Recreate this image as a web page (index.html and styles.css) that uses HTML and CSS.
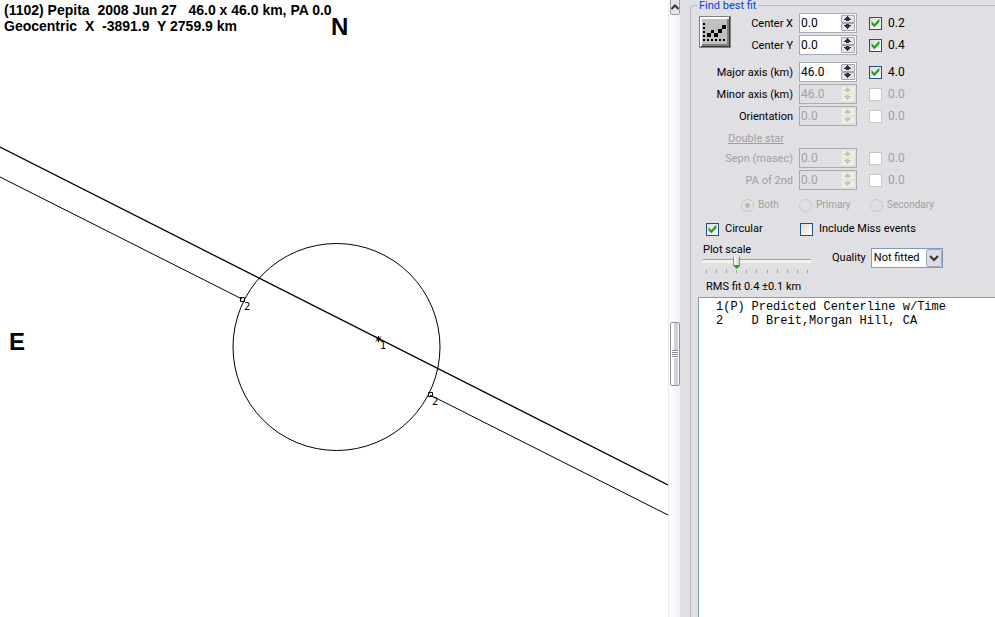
FILE: index.html
```html
<!DOCTYPE html>
<html lang="en">
<head>
<meta charset="utf-8">
<title>Find best fit</title>
<link rel="stylesheet" href="styles.css">
</head>
<body>
<svg class="defs" aria-hidden="true">
  <symbol id="up" viewBox="0 0 13 8"><path d="M6 1h1v1h1v1h1v1h1v1H8v1H5V5H3V4h1V3h1V2h1z"/></symbol>
  <symbol id="down" viewBox="0 0 13 8"><path d="M3 2h2V1h3v1h2v1H9v1H8v1H7v1H6V5H5V4H4V3H3z"/></symbol>
</svg>
<main class="plot">
  <svg class="chart" viewBox="0 0 668 617" preserveAspectRatio="xMinYMin slice" role="img" aria-label="Occultation chords">
    <circle cx="336.500" cy="347" r="103.500"/>
    <path class="center" d="M0 147L668 485"/>
    <path d="M0 177L242 299M430 395L668 515"/>
    <path d="M240.500 297.500h4v4h-4zM428.500 392.500h4v4h-4zM376 336.500l5 5m0-5l-5 5m0-2.500h5m-2.500-3v6"/>
    <text x="244" y="310">2</text><text x="380" y="349">1</text><text x="432" y="405">2</text>
    <text class="compass" x="331" y="35">N</text><text class="compass" x="9" y="350">E</text>
  </svg>
  <header class="title"><p>(1102) Pepita  2008 Jun 27   46.0 x 46.0 km, PA 0.0</p><p>Geocentric  X  -3891.9  Y 2759.9 km</p></header>
</main>
<div class="scroll" aria-hidden="true">
  <svg class="scroll-up" viewBox="0 0 10 16"><path d="M.5 0v13.500q0 1 1 1h7q1 0 1-1V0" fill="#e4e4ee" stroke="#9a9aaa"/><path d="M1.500 9L5 5.500 8.500 9" fill="none" stroke="#333" stroke-width="2"/></svg>
  <div class="thumb"><i></i></div>
</div>
<aside class="panel">
<form class="fit">
  <h1>Find best fit</h1>
  <section class="values">
    <button type="button" class="run" aria-label="Find best fit"><svg viewBox="0 0 32 32"><path fill="#c0c0c0" d="M0 0h32v32H0z"/><path fill="#808080" d="M0 0h32v1H1v31H0zM28 3h2v27H3v-2h25z"/><path fill="#fff" d="M1 1h29v2H3v27H1z"/><path fill="#333" d="M30 1h1v30H2v-1h28z"/><path fill="#808080" d="M31 1h1v31H1v-1h30z"/><path d="M4 7h2v2H4zm0 4h2v2H4zm0 4h2v2H4zm0 4h2v2H4zm0 4h2v2H4zm4 0h2v2H8zm4 0h2v2h-2zm4 0h2v2h-2zm4 0h2v2h-2zm4 0h2v2h-2zM8 17h4v4H8zM12 14h3v3h-3zM15 17h4v4h-4zM19 13h4v4h-4zM23 9h4v4h-4z"/></svg></button>
    <div class="row"><label for="cx">Center X</label><div class="spin"><input id="cx" value="0.0"><button type="button" aria-label="Increase"><svg><use href="#up"/></svg></button><button type="button" aria-label="Decrease"><svg><use href="#down"/></svg></button></div><label class="check"><input type="checkbox" checked>0.2</label></div>
    <div class="row"><label for="cy">Center Y</label><div class="spin"><input id="cy" value="0.0"><button type="button" aria-label="Increase"><svg><use href="#up"/></svg></button><button type="button" aria-label="Decrease"><svg><use href="#down"/></svg></button></div><label class="check"><input type="checkbox" checked>0.4</label></div>
    <div class="row group"><label for="ma">Major axis (km)</label><div class="spin"><input id="ma" value="46.0"><button type="button" aria-label="Increase"><svg><use href="#up"/></svg></button><button type="button" aria-label="Decrease"><svg><use href="#down"/></svg></button></div><label class="check"><input type="checkbox" checked>4.0</label></div>
    <div class="row"><label for="mi">Minor axis (km)</label><div class="spin off"><input id="mi" value="46.0" disabled><button type="button" disabled aria-label="Increase"><svg><use href="#up"/></svg></button><button type="button" disabled aria-label="Decrease"><svg><use href="#down"/></svg></button></div><label class="check off"><input type="checkbox" disabled>0.0</label></div>
    <div class="row"><label for="or">Orientation</label><div class="spin off"><input id="or" value="0.0" disabled><button type="button" disabled aria-label="Increase"><svg><use href="#up"/></svg></button><button type="button" disabled aria-label="Decrease"><svg><use href="#down"/></svg></button></div><label class="check off"><input type="checkbox" disabled>0.0</label></div>
    <h2>Double star</h2>
    <div class="row off"><label for="se">Sepn (masec)</label><div class="spin off"><input id="se" value="0.0" disabled><button type="button" disabled aria-label="Increase"><svg><use href="#up"/></svg></button><button type="button" disabled aria-label="Decrease"><svg><use href="#down"/></svg></button></div><label class="check off"><input type="checkbox" disabled>0.0</label></div>
    <div class="row off"><label for="pa">PA of 2nd</label><div class="spin off"><input id="pa" value="0.0" disabled><button type="button" disabled aria-label="Increase"><svg><use href="#up"/></svg></button><button type="button" disabled aria-label="Decrease"><svg><use href="#down"/></svg></button></div><label class="check off"><input type="checkbox" disabled>0.0</label></div>
  </section>
  <div class="radios"><label><input type="radio" name="star" checked disabled>Both</label><label><input type="radio" name="star" disabled>Primary</label><label><input type="radio" name="star" disabled>Secondary</label></div>
  <div class="options"><label class="check"><input type="checkbox" checked>Circular</label><label class="check"><input type="checkbox">Include Miss events</label></div>
  <div class="settings">
    <div class="scale"><label for="scale">Plot scale</label><input id="scale" type="range" min="0" max="10" value="3"><div class="ticks"><i></i><i></i><i></i><i></i><i></i><i></i><i></i><i></i><i></i><i></i><i></i></div></div>
    <label for="quality">Quality</label>
    <div class="select"><select id="quality"><option>Not fitted</option></select><svg viewBox="0 0 16 18"><rect x=".5" y=".5" width="15" height="17" rx="1" fill="#dcdce8" stroke="#a5a5b8"/><path d="M4 7l4 4 4-4" fill="none" stroke="#333" stroke-width="2"/></svg></div>
  </div>
  <output class="rms">RMS fit 0.4 ±0.1 km</output>
  <table class="events"><tbody><tr><td>1(P)</td><td>Predicted Centerline w/Time</td></tr><tr><td>2</td><td>D Breit,Morgan Hill, CA</td></tr></tbody></table>
  <div class="rest"></div>
</form>
</aside>
</body>
</html>
```
FILE: styles.css
```css
* { box-sizing: border-box; }
body { margin: 0; min-height: 100vh; display: flex; background: #fff; color: #000; font: 11px/14px Roboto, "Liberation Sans", sans-serif; overflow: hidden; }
h1, h2, p { margin: 0; font: inherit; }
button, input, select { font: inherit; color: inherit; margin: 0; padding: 0; border: 0; }
.defs { position: absolute; width: 0; height: 0; }

.plot { position: relative; flex: 1; min-width: 0; overflow: hidden; }
.chart { position: absolute; width: 100%; height: 100%; fill: none; stroke: #000; stroke-width: 1; }
.chart .center { stroke-width: 1.3; }
.chart text { fill: #000; stroke: none; font: 10px "DejaVu Sans", sans-serif; }
.chart .compass { font: bold 24px "Liberation Sans", sans-serif; }
.title { position: relative; padding: 2px 4px; font: bold 14px/16px "Liberation Sans", sans-serif; white-space: pre; }

.scroll { flex: none; width: 12px; display: flex; flex-direction: column; justify-content: space-between; align-items: flex-end; border-left: 1px solid #ecebdc; background: linear-gradient(90deg, #fff, #f0f0f8); }
.scroll-up { width: 10px; height: 16px; }
.thumb { width: 10px; height: 64px; margin-bottom: 231px; border: 1px solid #8f8fa0; border-radius: 2px; background: linear-gradient(90deg, #fff 0 3px, #cfcfdf 3px 7px, #fff 7px); display: grid; place-items: center; }
.thumb i { width: 6px; height: 8px; background: repeating-linear-gradient(#888898 0 1px, #fff 1px 2px); }

.panel { flex: none; width: 315px; padding: 5px 0 0 10px; background: #e0dfe4; display: flex; }
.fit { flex: 1; min-width: 0; display: flex; flex-direction: column; border: 1px solid #bdb6be; border-width: 1px 0 0 1px; border-top-left-radius: 4px; padding-left: 7px; }
h1 { align-self: flex-start; height: 12px; line-height: 12px; color: #0046d5; background: #e0dfe4; padding: 0 2px; margin: -6px 0 1px -1px; }
.values { position: relative; display: flex; flex-direction: column; gap: 2px; }
.run { position: absolute; top: 3px; left: 1px; width: 32px; height: 32px; background: none; }
.run svg { display: block; width: 32px; height: 32px; }
.row { display: grid; grid-template-columns: 95px 58px 1fr; column-gap: 6px; height: 20px; align-items: center; }
.row > label:first-child { text-align: right; padding-top: 2px; }
.row.group { margin-top: 5px; }
.off, .radios { color: #a09fa3; }
h2 { margin: 4px 0 0 30px; height: 14px; color: #a09fa3; text-decoration: underline; }
.spin { height: 20px; display: grid; grid-template-columns: 1fr 14px; grid-template-rows: 8px 8px; column-gap: 1px; border: 1px solid #a5acb2; background: #fff; padding: 1px; }
.spin.off { background: #e0dfe4; }
.spin input { grid-row: 1 / 3; min-width: 0; height: 15px; background: none; font-size: 12px; }
.spin button { border: 1px solid #a5a5b0; border-radius: 1px; background: #e4e4ec; display: flex; fill: #333; }
.spin svg { width: 13px; height: 8px; margin: -1px; flex: none; }
.spin.off button { border-color: #e7e6d8; background: #f0efe6; fill: #c9c7ba; }
.check { display: flex; align-items: center; gap: 6px; }
.row .check { padding-left: 6px; font-size: 12px; }
input[type="checkbox"] { appearance: none; flex: none; width: 13px; height: 13px; border: 1px solid #1c5180; background: linear-gradient(135deg, #dcdcd7, #fff); display: grid; place-items: center; }
input[type="checkbox"]:checked::before { content: ""; width: 9px; height: 9px; background: #21a121; clip-path: polygon(6% 30%, 38% 60%, 90% 4%, 95% 36%, 38% 96%, 6% 66%); }
input[type="checkbox"]:disabled { border-color: #cac8bb; background: #fff; }
.radios { display: grid; grid-template-columns: 58px 71px auto; justify-content: start; padding-left: 43px; margin-top: 8px; height: 14px; font-size: 10px; }
.radios label { display: flex; align-items: center; gap: 4px; }
input[type="radio"] { appearance: none; flex: none; width: 13px; height: 13px; border: 1px solid #cac8bb; border-radius: 50%; }
input[type="radio"]:checked { background: radial-gradient(circle, #bdbbb0 0 2px, transparent 3px); }
.options { display: grid; grid-template-columns: 94px auto; justify-content: start; padding-left: 8px; margin-top: 10px; }
.settings { display: flex; align-items: center; padding-left: 5px; margin-top: 7px; }
.scale { display: flex; flex-direction: column; width: 108px; margin-right: 21px; }
#scale { appearance: none; width: 108px; height: 12px; background: linear-gradient(#a09f9a 0 1px, #f5f4ea 1px 4px) 0 2px / 100% 4px no-repeat; }
#scale::-webkit-slider-thumb { appearance: none; width: 7px; height: 12px; background: linear-gradient(90deg, #7d8c91 0 1px, #fff 1px, #d4d4d4 6px, #7d8c91 6px) 0 0 / 100% 8px no-repeat, #21a121; clip-path: polygon(0 0, 100% 0, 100% 70%, 50% 100%, 0 70%); }
.ticks { display: flex; justify-content: space-between; padding: 1px 3px 0; }
.ticks i { width: 1px; height: 3px; background: #a09f9a; }
.select { position: relative; width: 72px; height: 20px; margin-left: 5px; }
.select select { appearance: none; width: 100%; height: 100%; border: 1px solid #7f9db9; background: #fff; padding-left: 2px; }
.select svg { position: absolute; right: 1px; top: 1px; width: 16px; height: 18px; pointer-events: none; }
.rms { padding-left: 8px; margin: 7px 0 3px; }
.events { border-collapse: collapse; background: #fff; border: 1px solid #7f9db9; border-width: 1px 0 0 1px; font: 12px/14px "Liberation Mono", monospace; }
.events td { padding: 0; }
.events td:first-child { width: 53px; padding-left: 17px; }
.events tr:first-child td { padding-top: 2px; }
.rest { flex: 1; background: #fff; border-left: 1px solid #7f9db9; }
```
